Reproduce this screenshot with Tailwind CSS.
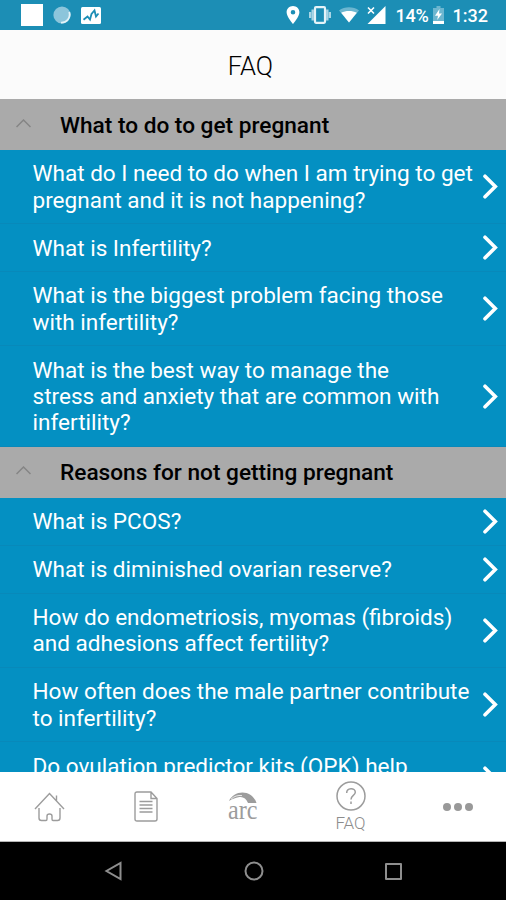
<!DOCTYPE html>
<html lang="en">
<head>
    <meta charset="UTF-8">
    <meta name="viewport" content="width=device-width, initial-scale=1.0">
    <title>FAQ</title>
    <script src="https://cdn.jsdelivr.net/npm/@tailwindcss/browser@4"></script>
</head>
<body class="bg-black font-[Roboto,sans-serif]">
<div class="flex flex-col h-[900px] w-[506px] overflow-hidden">

    <!-- Status bar -->
    <div class="h-[30px] shrink-0 bg-[#1c8eb5] flex items-center justify-between pl-[21px] pr-[18px] text-white">
        <div class="flex items-center gap-[10px]">
            <div class="w-[22px] h-[22px] bg-white"></div>
            <svg class="w-[18px] h-[18px]" viewBox="0 0 18 18">
                <circle cx="9" cy="9" r="8.6" fill="#8cc5db"/>
                <path d="M16.2 6 A8 8 0 0 1 8 16.6" fill="none" stroke="#e4f3f8" stroke-width="1.8"/>
            </svg>
            <svg class="w-[20px] h-[17px]" viewBox="0 0 20 17">
                <rect width="20" height="17" rx="1.5" fill="#fff"/>
                <path d="M2.5 12.8 L6.5 9.5 L9 12.5 L10.5 7 L13.5 3.5 L15 9.5 L17.5 6.5" fill="none" stroke="#1c8eb5" stroke-width="1.8"/>
            </svg>
        </div>
        <div class="flex items-center">
            <svg class="w-[14px] h-[18px] mr-[9px]" viewBox="0 0 14 18">
                <path fill-rule="evenodd" fill="#fff" d="M7 0 C3.4 0 .6 2.8 .6 6.3 C.6 11 7 18 7 18 S13.4 11 13.4 6.3 C13.4 2.8 10.6 0 7 0 Z M7 4 A2.3 2.3 0 1 1 7 8.6 A2.3 2.3 0 1 1 7 4 Z"/>
            </svg>
            <svg class="w-[22px] h-[18px] mr-[8px]" viewBox="0 0 22 18">
                <path d="M1 6 V12 M3.7 3.5 V14.5 M18.3 3.5 V14.5 M21 6 V12" stroke="#a9d5e5" stroke-width="2.4"/>
                <rect x="6" y="1.2" width="10" height="15.6" rx="1" fill="none" stroke="#e4f3f8" stroke-width="2.2"/>
            </svg>
            <svg class="w-[20px] h-[16px] mr-[8px]" viewBox="0 0 20 16">
                <path d="M10 15.5 L0 3.5 C5.5 -.8 14.5 -.8 20 3.5 Z" fill="#6cb6d0"/>
                <path d="M10 15.5 L2.2 5.8 C6.5 3.4 13.5 3.4 17.8 5.8 Z" fill="#fff"/>
            </svg>
            <svg class="w-[19px] h-[18px] mr-[10px]" viewBox="0 0 19 18">
                <path d="M18.5 0 V18 H.5 Z" fill="#fff"/>
                <path d="M1 1.5 L7 7.5 M7 1.5 L1 7.5" stroke="#fff" stroke-width="1.6"/>
            </svg>
            <span class="text-[18px] leading-none font-medium w-[32px] whitespace-nowrap tracking-[-0.3px] pt-[2px]">14%</span>
            <svg class="w-[11px] h-[18px] ml-[5px] mr-[9px]" viewBox="0 0 11 18">
                <path d="M3.5 0 H7.5 V2 H11 V18 H0 V2 H3.5 Z" fill="#6cb6d0"/>
                <path d="M0 15 H11 V18 H0 Z M6.5 3 L2 9.8 H5 L4.2 14 L9 7.6 H6 Z" fill="#fff"/>
            </svg>
            <span class="text-[18px] leading-none font-medium pt-[2px]">1:32</span>
        </div>
    </div>

    <!-- Title -->
    <div class="h-[69px] shrink-0 bg-[#fbfbfb] flex items-center justify-center pt-[3px] pr-[5px]">
        <h1 class="text-[25.5px] font-light text-black">FAQ</h1>
    </div>

    <div id="faq" class="flex-1 min-h-0 overflow-hidden bg-[#0490c2]"></div>

    <!-- Tab bar -->
    <div class="h-[70px] shrink-0 bg-white flex items-center border-b border-[#b5b5b5] text-[#9c9c9c]">
        <div class="w-[98px] flex justify-center">
            <svg class="w-[31px] h-[30px]" viewBox="0 0 31 30" fill="none" stroke="currentColor" stroke-width="1.4">
                <path d="M1 17 L15.5 1.5 L30 17 M22.5 8.5 V3.5"/>
                <path d="M5 16 V26 Q5 28.5 7.5 28.5 H12 Q13 28.5 13 27 V24 Q13 22 15.5 22 Q18 22 18 24 V27 Q18 28.5 19 28.5 H23.5 Q26 28.5 26 26 V16"/>
            </svg>
        </div>
        <div class="w-[96px] flex justify-center">
            <svg class="w-[24px] h-[31px]" viewBox="0 0 24 31" fill="none" stroke="currentColor" stroke-width="1.4">
                <path d="M3 1 H17 L23 7.5 V28 Q23 30 21 30 H3 Q1 30 1 28 V3 Q1 1 3 1 Z M17 1 V7.5 H23"/>
                <path d="M5.5 10.5 H18.5 M5.5 14 H18.5 M5.5 17.5 H18.5 M5.5 21 H18.5"/>
            </svg>
        </div>
        <div class="w-[98px] flex justify-center">
            <svg class="w-[30px] h-[30px] overflow-visible" viewBox="0 0 30 30" fill="currentColor">
                <path d="M1 9 C6 -2.5 24 -3 28.5 11 L20 11 C18.5 6.5 15 4.5 11.5 5 C7 5.6 3.5 7.5 1 9 Z"/>
                <path d="M3 7.2 C6 4.2 10 3 14 3.6" fill="none" stroke="#fff" stroke-width=".8"/>
                <text x="0" y="27" font-family="Liberation Serif, serif" font-size="28" textLength="29.5" lengthAdjust="spacingAndGlyphs">arc</text>
            </svg>
        </div>
        <div class="w-[117px] flex flex-col items-center">
            <svg class="w-[30px] h-[30px]" viewBox="0 0 30 30" fill="none" stroke="currentColor" stroke-width="1.5">
                <circle cx="15" cy="15" r="14"/>
                <path d="M10.7 12 C10.5 6.3 19.5 6.3 19.3 11.3 C19.2 14.5 15 14.5 15 18.5 M15 20.5 V23"/>
            </svg>
            <span class="text-[17px] leading-[20px] font-light mt-[2px] text-[#8c8c8c]">FAQ</span>
        </div>
        <div class="w-[97px] flex justify-center gap-[3px]">
            <div class="w-2 h-2 rounded-full bg-[#999]"></div>
            <div class="w-2 h-2 rounded-full bg-[#999]"></div>
            <div class="w-2 h-2 rounded-full bg-[#999]"></div>
        </div>
    </div>

    <!-- Android buttons -->
    <div class="h-[58px] shrink-0 bg-black flex items-center justify-between pl-[104px] pr-[104px]">
        <svg class="w-[19px] h-[20px]" viewBox="0 0 19 20" fill="none" stroke="#8e8e8e" stroke-width="2">
            <path d="M16.5 2 V18 L2.5 10 Z"/>
        </svg>
        <svg class="w-[20px] h-[20px]" viewBox="0 0 20 20" fill="none" stroke="#8e8e8e" stroke-width="2">
            <circle cx="10" cy="10" r="8.5"/>
        </svg>
        <div class="w-[17px] h-[17px] border-2 border-[#8e8e8e] rounded-[1px]"></div>
    </div>
</div>

<script>
const sections = [
    {
        title: 'What to do to get pregnant',
        questions: [
            ['What do I need to do when I am trying to get', 'pregnant and it is not happening?'],
            ['What is Infertility?'],
            ['What is the biggest problem facing those', 'with infertility?'],
            ['What is the best way to manage the', 'stress and anxiety that are common with', 'infertility?']
        ]
    },
    {
        title: 'Reasons for not getting pregnant',
        questions: [
            ['What is PCOS?'],
            ['What is diminished ovarian reserve?'],
            ['How do endometriosis, myomas (fibroids)', 'and adhesions affect fertility?'],
            ['How often does the male partner contribute', 'to infertility?'],
            ['Do ovulation predictor kits (OPK) help', '&nbsp;']
        ]
    }
];

document.getElementById('faq').innerHTML = sections.map(section => `
    <section>
        <div class="h-[51px] bg-[#aaaaaa] flex items-center pl-4">
            <svg class="w-[15px] h-[9px] mb-[3px] mr-[29px]" viewBox="0 0 15 9" fill="none" stroke="#858585" stroke-width="1.5">
                <path d="M.5 8 L7.5 1 L14.5 8"/>
            </svg>
            <h2 class="text-[22.65px] font-medium text-black whitespace-nowrap pt-[2px]">${section.title}</h2>
        </div>
        ${section.questions.map(lines => `
            <div class="flex items-center justify-between pl-[32.5px] pr-2 border-b border-[#0889ba]">
                <p class="text-[22.55px] leading-[26.3px] text-white whitespace-nowrap pt-[11.3px] pb-[9.35px]">${lines.join('<br>')}</p>
                <svg class="w-[15px] h-[25px] shrink-0" viewBox="0 0 15 25" fill="none" stroke="#fff" stroke-width="3.6" stroke-linecap="round">
                    <path d="M2 2.2 L12.3 12.5 L2 22.8"/>
                </svg>
            </div>
        `).join('')}
    </section>
`).join('');
</script>
</body>
</html>
